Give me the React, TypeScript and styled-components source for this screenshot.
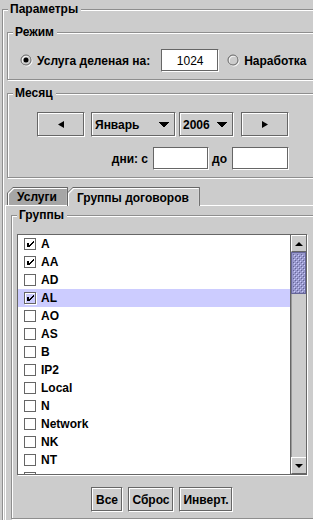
import React from "react";
import styled, { createGlobalStyle, css } from "styled-components";

const Global = createGlobalStyle`
  html, body { margin: 0; padding: 0; background: #cccccc; overflow: hidden; }
  body { font-family: "Liberation Sans", Arial, sans-serif; font-size: 12px; color: #000; }
  * { box-sizing: border-box; }
`;

const flush3d = css`
  border: 1px solid;
  border-color: #666666 #ffffff #ffffff #666666;
  box-shadow: inset -1px -1px #666666, inset 1px 1px #ffffff;
`;

const Page = styled.div`
  width: 340px;
  height: 520px;
  overflow: hidden;
  padding: 2px 0 0 2px;
`;

const TitledBox = styled.fieldset<{ $indent?: number }>`
  margin: 0 0 0 ${(p) => p.$indent ?? 0}px;
  padding: 0;
  min-width: 0;
  border: 1px solid #8e8e8e;
  box-shadow: inset 1px 1px #ffffff, 1px 1px #ffffff;
`;

const Title = styled.legend`
  margin-left: 5px;
  padding: 0 3px 0 2px;
  font-weight: bold;
  font-size: 12px;
  line-height: 14px;
  background: #cccccc;
`;

const ParamsBody = styled.div`
  display: flex;
  flex-direction: column;
  gap: 6px;
  padding: 9px 0 0 2px;
`;

const ModeRow = styled.div`
  display: flex;
  align-items: center;
  padding: 10px 0 7px 12px;
`;

const RadioLabel = styled.label<{ $ml?: number }>`
  display: inline-flex;
  align-items: center;
  gap: 4px;
  font-weight: bold;
  white-space: nowrap;
  margin-left: ${(p) => p.$ml ?? 0}px;
`;

const Field = styled.input<{ $w: number; $ml?: number; $center?: boolean }>`
  width: ${(p) => p.$w}px;
  height: 23px;
  margin: 0 0 0 ${(p) => p.$ml ?? 0}px;
  padding: 0 3px;
  ${flush3d};
  background: #ffffff;
  font: 12px "Liberation Sans", Arial, sans-serif;
  color: #000;
  text-align: ${(p) => (p.$center ? "center" : "left")};
  outline: none;
`;

const MonthBody = styled.div`
  padding: 12px 0 7px 29px;
`;

const MonthGrid = styled.div`
  width: 252px;
  display: flex;
  flex-direction: column;
  gap: 10px;
`;

const MonthRow = styled.div`
  display: flex;
  height: 25px;
`;

const DaysRow = styled.div`
  display: flex;
  justify-content: flex-end;
  align-items: center;
  height: 23px;
  font-weight: bold;
`;

const DayLabel = styled.span<{ $ml?: number }>`
  margin-left: ${(p) => p.$ml ?? 0}px;
  white-space: nowrap;
`;

const Button = styled.button<{ $w: number; $ml?: number }>`
  width: ${(p) => p.$w}px;
  height: 25px;
  margin: 0 0 0 ${(p) => p.$ml ?? 0}px;
  padding: 0;
  ${flush3d};
  background: #cccccc;
  font: bold 12px "Liberation Sans", Arial, sans-serif;
  color: #000;
  display: flex;
  align-items: center;
  justify-content: center;
  flex: none;
`;

const Combo = styled.div<{ $w: number; $ml?: number }>`
  width: ${(p) => p.$w}px;
  height: 25px;
  margin-left: ${(p) => p.$ml ?? 0}px;
  ${flush3d};
  background: #cccccc;
  display: flex;
  align-items: center;
  padding: 0 1px 0 3px;
  font-weight: bold;
  flex: none;
`;

const ComboText = styled.span`
  flex: 1;
  white-space: nowrap;
`;

const ComboArrow = styled.span`
  width: 21px;
  display: flex;
  justify-content: center;
  align-items: center;
`;

const Tabs = styled.div`
  margin-top: 3px;
  display: flex;
  flex-direction: column;
`;

const TabStrip = styled.div`
  display: flex;
  align-items: flex-start;
  height: 18px;
  padding-left: 2px;
  position: relative;
  z-index: 2;
`;

const TabOuter = styled.div<{ $sel?: boolean }>`
  height: ${(p) => (p.$sel ? 19 : 18)}px;
  margin-left: ${(p) => (p.$sel ? -1 : 0)}px;
  padding: 1px 1px 0 1px;
  background: #666666;
  clip-path: polygon(0 6px, 6px 0, 100% 0, 100% 100%, 0 100%);
  position: relative;
  z-index: ${(p) => (p.$sel ? 2 : 1)};
`;

const TabHi = styled.div`
  height: 100%;
  padding: 1px 0 0 1px;
  background: #ffffff;
  clip-path: polygon(0 5px, 5px 0, 100% 0, 100% 100%, 0 100%);
`;

const TabFace = styled.div<{ $sel?: boolean }>`
  height: 100%;
  background: ${(p) => (p.$sel ? "#cccccc" : "#a6a6a6")};
  clip-path: polygon(0 5px, 5px 0, 100% 0, 100% 100%, 0 100%);
  display: flex;
  align-items: center;
  padding: 0 10px 0 8px;
  font-weight: bold;
  white-space: nowrap;
`;

const TabContent = styled.div`
  border-top: 1px solid #ffffff;
  border-left: 1px solid #ffffff;
  border-right: 1px solid #666666;
  border-bottom: 1px solid #666666;
  padding: 2px 0 3px 5px;
`;

const GroupBody = styled.div`
  padding: 12px 0 6px 5px;
`;

const ListPane = styled.div`
  width: 290px;
  height: 241px;
  border: 1px solid #666666;
  box-shadow: 1px 1px #ffffff;
  display: flex;
`;

const ListView = styled.div`
  flex: 1;
  background: #ffffff;
  overflow: hidden;
  display: flex;
  flex-direction: column;
`;

const ListRow = styled.div<{ $selected?: boolean }>`
  flex: none;
  height: 18px;
  display: flex;
  align-items: center;
  gap: 4px;
  padding-left: 6px;
  font-weight: bold;
  background: ${(p) => (p.$selected ? "#ccccff" : "transparent")};
`;

const ScrollBar = styled.div`
  width: 16px;
  border-left: 1px solid #666666;
  display: flex;
  flex-direction: column;
  background: #cccccc;
`;

const ScrollButton = styled.div`
  height: 17px;
  flex: none;
  border-top: 1px solid #ffffff;
  border-left: 1px solid #ffffff;
  border-bottom: 1px solid #666666;
  background: #cccccc;
  display: flex;
  align-items: center;
  justify-content: center;
`;

const Track = styled.div`
  flex: 1;
  border-left: 1px solid #999999;
`;

const Thumb = styled.div`
  height: 42px;
  margin-left: -1px;
  border: 1px solid #666699;
  background: #9999cc;
  display: flex;
`;

const ButtonRow = styled.div`
  width: 290px;
  margin-top: 12px;
  display: flex;
  justify-content: center;
  gap: 5px;
`;

const RadioIcon = ({ on }: { on?: boolean }) => (
  <svg width="13" height="13" viewBox="0 0 13 13">
    <circle cx="7" cy="7" r="5" fill="none" stroke="#ffffff" strokeWidth="1" />
    <circle cx="6" cy="6" r="5" fill="none" stroke="#666666" strokeWidth="1" />
    {on && <circle cx="6" cy="6" r="2.5" fill="#000000" />}
  </svg>
);

const CheckIcon = ({ on }: { on?: boolean }) => (
  <svg width="13" height="13" viewBox="0 0 13 13" shapeRendering="crispEdges" style={{ flex: "none" }}>
    <rect x="1.5" y="1.5" width="11" height="11" fill="none" stroke="#ffffff" />
    <rect x="0.5" y="0.5" width="11" height="11" fill="none" stroke="#666666" />
    {on && (
      <path
        d="M3 5h2v4h-2z M5 7h1v2h-1z M6 6h1v2h-1z M7 5h1v2h-1z M8 4h1v2h-1z M9 3h1v2h-1z"
        fill="#000000"
      />
    )}
  </svg>
);

const DownArrow = () => (
  <svg width="10" height="5" viewBox="0 0 10 5" shapeRendering="crispEdges">
    <path d="M0 0h10v1h-1v1h-1v1h-1v1h-1v1h-2v-1h-1v-1h-1v-1h-1v-1h-1z" fill="#000" />
  </svg>
);

const SmallArrow = ({ dir }: { dir: "left" | "right" | "up" | "down" }) => {
  const pts: Record<string, string> = {
    left: "0,3.5 6,0 6,7",
    right: "6,3.5 0,0 0,7",
    up: "0,4 4,0 8,4",
    down: "0,0 8,0 4,4",
  };
  const vertical = dir === "up" || dir === "down";
  return (
    <svg width={vertical ? 8 : 6} height={vertical ? 4 : 7} viewBox={vertical ? "0 0 8 4" : "0 0 6 7"}>
      <polygon points={pts[dir]} fill="#000" />
    </svg>
  );
};

const Bumps = () => (
  <svg width="100%" height="100%" shapeRendering="crispEdges">
    <defs>
      <pattern id="bumps" width="4" height="4" patternUnits="userSpaceOnUse">
        <rect x="0" y="0" width="1" height="1" fill="#ccccff" />
        <rect x="2" y="2" width="1" height="1" fill="#ccccff" />
        <rect x="1" y="1" width="1" height="1" fill="#666699" />
        <rect x="3" y="3" width="1" height="1" fill="#666699" />
      </pattern>
    </defs>
    <rect x="1" y="1" width="100%" height="100%" fill="url(#bumps)" />
  </svg>
);

const groups: { name: string; on?: boolean; sel?: boolean }[] = [
  { name: "A", on: true },
  { name: "AA", on: true },
  { name: "AD" },
  { name: "AL", on: true, sel: true },
  { name: "AO" },
  { name: "AS" },
  { name: "B" },
  { name: "IP2" },
  { name: "Local" },
  { name: "N" },
  { name: "Network" },
  { name: "NK" },
  { name: "NT" },
  { name: "" },
];

export default function App() {
  return (
    <Page>
      <Global />
      <TitledBox>
        <Title>Параметры</Title>
        <ParamsBody>
          <TitledBox $indent={2}>
            <Title>Режим</Title>
            <ModeRow>
              <RadioLabel>
                <RadioIcon on />
                Услуга деленая на:
              </RadioLabel>
              <Field $w={58} $ml={11} $center value="1024" readOnly />
              <RadioLabel $ml={8}>
                <RadioIcon />
                Наработка
              </RadioLabel>
            </ModeRow>
          </TitledBox>

          <TitledBox $indent={2}>
            <Title>Месяц</Title>
            <MonthBody>
              <MonthGrid>
                <MonthRow>
                  <Button $w={48}>
                    <SmallArrow dir="left" />
                  </Button>
                  <Combo $w={85} $ml={6}>
                    <ComboText>Январь</ComboText>
                    <ComboArrow>
                      <DownArrow />
                    </ComboArrow>
                  </Combo>
                  <Combo $w={55} $ml={3}>
                    <ComboText>2006</ComboText>
                    <ComboArrow>
                      <DownArrow />
                    </ComboArrow>
                  </Combo>
                  <Button $w={48} $ml={7}>
                    <SmallArrow dir="right" />
                  </Button>
                </MonthRow>
                <DaysRow>
                  <DayLabel>дни: с</DayLabel>
                  <Field $w={56} $ml={5} readOnly value="" />
                  <DayLabel $ml={3}>до</DayLabel>
                  <Field $w={57} $ml={5} readOnly value="" />
                </DaysRow>
              </MonthGrid>
            </MonthBody>
          </TitledBox>

          <Tabs>
            <TabStrip>
              <TabOuter>
                <TabHi>
                  <TabFace>Услуги</TabFace>
                </TabHi>
              </TabOuter>
              <TabOuter $sel>
                <TabHi>
                  <TabFace $sel>Группы договоров</TabFace>
                </TabHi>
              </TabOuter>
            </TabStrip>
            <TabContent>
              <TitledBox>
                <Title>Группы</Title>
                <GroupBody>
                  <ListPane>
                    <ListView>
                      {groups.map((g, i) => (
                        <ListRow key={g.name + i} $selected={g.sel}>
                          <CheckIcon on={g.on} />
                          {g.name}
                        </ListRow>
                      ))}
                    </ListView>
                    <ScrollBar>
                      <ScrollButton>
                        <SmallArrow dir="up" />
                      </ScrollButton>
                      <Track>
                        <Thumb>
                          <Bumps />
                        </Thumb>
                      </Track>
                      <ScrollButton>
                        <SmallArrow dir="down" />
                      </ScrollButton>
                    </ScrollBar>
                  </ListPane>
                  <ButtonRow>
                    <Button $w={32}>Все</Button>
                    <Button $w={46}>Сброс</Button>
                    <Button $w={54}>Инверт.</Button>
                  </ButtonRow>
                </GroupBody>
              </TitledBox>
            </TabContent>
          </Tabs>
        </ParamsBody>
      </TitledBox>
    </Page>
  );
}
